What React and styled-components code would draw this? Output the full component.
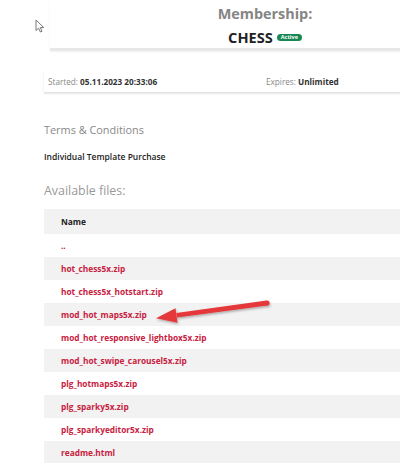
import React from "react";
import styled, { createGlobalStyle } from "styled-components";

const GlobalStyle = createGlobalStyle`
  html, body {
    margin: 0;
    padding: 0;
    background: #fff;
    overflow: hidden;
  }
  body {
    font-family: "Open Sans", "Noto Sans", sans-serif;
  }
`;

const files = [
  "..",
  "hot_chess5x.zip",
  "hot_chess5x_hotstart.zip",
  "mod_hot_maps5x.zip",
  "mod_hot_responsive_lightbox5x.zip",
  "mod_hot_swipe_carousel5x.zip",
  "plg_hotmaps5x.zip",
  "plg_sparky5x.zip",
  "plg_sparkyeditor5x.zip",
  "readme.html",
];

function App() {
  return (
    <>
      <GlobalStyle />
      <Page>
        <Cursor width="11" height="14" viewBox="0 0 11 14">
          <path
            d="M1 1 L1 11.5 L3.6 9.2 L5.4 13 L7 12.3 L5.3 8.6 L8.8 8.6 Z"
            fill="#fff"
            stroke="#777"
            strokeWidth="1"
            strokeLinejoin="round"
          />
        </Cursor>

        <HeaderCard>
          <Title>Membership:</Title>
          <Plan>
            CHESS <Badge>Active</Badge>
          </Plan>
        </HeaderCard>

        <InfoRow>
          <InfoItem>
            Started: <b>05.11.2023 20:33:06</b>
          </InfoItem>
          <InfoItem>
            Expires: <b>Unlimited</b>
          </InfoItem>
        </InfoRow>

        <SectionTitle>Terms &amp; Conditions</SectionTitle>
        <Terms>Individual Template Purchase</Terms>

        <FilesTitle>Available files:</FilesTitle>
        <Table>
          <HeadRow>Name</HeadRow>
          {files.map((f, i) => (
            <FileRow key={f} $striped={i % 2 === 1}>
              <FileLink>{f}</FileLink>
            </FileRow>
          ))}
        </Table>

        {/* annotation arrow pointing at mod_hot_maps5x.zip */}
        <Arrow width="130" height="40" viewBox="0 0 130 40">
          <defs>
            <filter id="sh" x="-10%" y="-30%" width="120%" height="160%">
              <feDropShadow dx="0.8" dy="1.5" stdDeviation="1" floodColor="#000" floodOpacity="0.3" />
            </filter>
          </defs>
          <g filter="url(#sh)" fill="#e5383b">
            <circle cx="119" cy="13" r="2.6" />
            <path d="M119.4 15.6 L118.6 10.4 L28.3 23 L28.9 27.6 Z" />
            <path d="M8 28.2 L27.5 18.2 L29.5 32.8 Z" />
          </g>
        </Arrow>
      </Page>
    </>
  );
}

const Page = styled.div`
  position: relative;
  width: 400px;
  height: 463px;
  overflow: hidden;
  padding-left: 44px;
  box-sizing: border-box;
`;

const Cursor = styled.svg`
  position: absolute;
  left: 35px;
  top: 19px;
`;

const HeaderCard = styled.div`
  width: 430px;
  margin-left: 6px;
  height: 51px;
  padding-top: 4px;
  box-sizing: border-box;
  border-bottom: 3px solid #e8e8e8;
  box-shadow: 0 1px 2px rgba(0, 0, 0, 0.06);
  display: flex;
  flex-direction: column;
  align-items: center;
`;

const Title = styled.div`
  font-size: 14.4px;
  font-weight: 700;
  color: #858585;
  line-height: 20px;
`;

const Plan = styled.div`
  margin-top: 2px;
  font-size: 14.6px;
  font-weight: 700;
  color: #222;
  line-height: 22px;
  display: flex;
  align-items: center;
  gap: 4px;
`;

const Badge = styled.span`
  background: #198754;
  color: #fff;
  font-size: 5.5px;
  font-weight: 700;
  line-height: 7px;
  padding: 0 4px;
  border-radius: 4px;
  margin-top: 1px;
`;

const InfoRow = styled.div`
  width: 440px;
  margin-top: 19px;
  height: 23px;
  border-bottom: 1px solid #e2e2e2;
  box-shadow: 0 1px 2px rgba(0, 0, 0, 0.1);
  display: flex;
  align-items: center;
  padding-left: 4px;
  box-sizing: border-box;
`;

const InfoItem = styled.div`
  font-size: 8.2px;
  color: #888;
  width: 220px;
  b {
    color: #333;
    font-weight: 700;
  }
`;

const SectionTitle = styled.div`
  margin-top: 29px;
  font-size: 10.9px;
  color: #888;
  line-height: 16px;
`;

const Terms = styled.div`
  margin-top: 13px;
  font-size: 8.5px;
  font-weight: 600;
  color: #222;
  line-height: 12px;
`;

const FilesTitle = styled.div`
  margin-top: 20px;
  font-size: 12.4px;
  color: #9a9a9a;
  line-height: 16px;
`;

const Table = styled.div`
  margin-top: 10px;
  width: 100%;
`;

const HeadRow = styled.div`
  background: #f2f2f2;
  height: 25px;
  display: flex;
  align-items: center;
  padding-left: 17px;
  font-size: 8.4px;
  font-weight: 700;
  color: #222;
`;

const FileRow = styled.div`
  background: ${(p) => (p.$striped ? "#f2f2f2" : "#fff")};
  height: 23px;
  display: flex;
  align-items: center;
  padding-left: 17px;
`;

const FileLink = styled.a`
  font-size: 8.3px;
  font-weight: 700;
  color: #c8213f;
  text-decoration: none;
`;

const Arrow = styled.svg`
  position: absolute;
  left: 148px;
  top: 290px;
`;

export default App;
